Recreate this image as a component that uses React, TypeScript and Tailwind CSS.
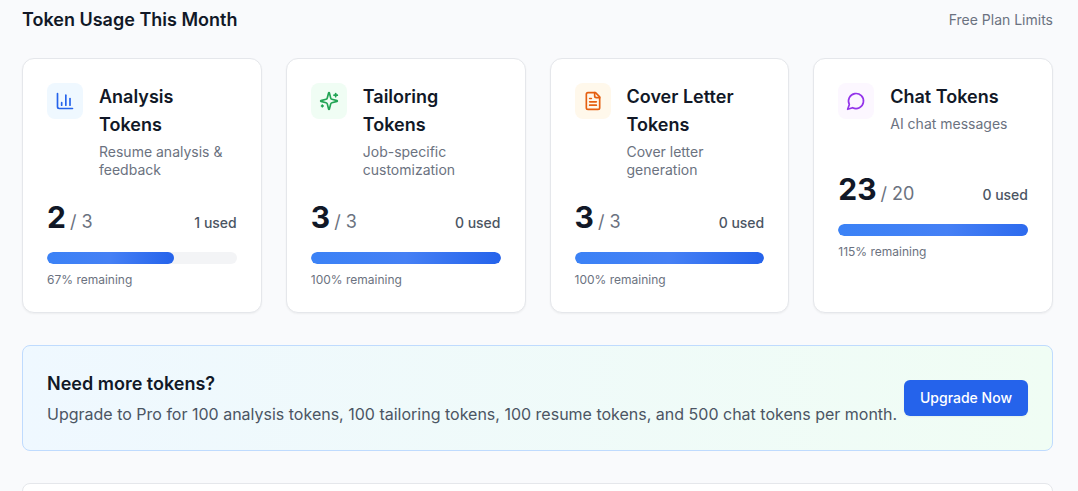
import React from 'react';
import { ChartColumn } from 'lucide-react';

interface TokenCard {
  title: string;
  description: string;
  remaining: number;
  limit: number;
  used: number;
  iconClass: string;
  icon: React.ReactNode;
}

const svgProps = {
  viewBox: '0 0 24 24',
  fill: 'none',
  stroke: 'currentColor',
  strokeWidth: 2,
  strokeLinecap: 'round' as const,
  strokeLinejoin: 'round' as const,
  className: 'w-5 h-5',
};

const SparklesIcon = () => (
  <svg {...svgProps}>
    <path d="M9.937 15.5A2 2 0 0 0 8.5 14.063l-6.135-1.582a.5.5 0 0 1 0-.962L8.5 9.936A2 2 0 0 0 9.937 8.5l1.582-6.135a.5.5 0 0 1 .963 0L14.063 8.5A2 2 0 0 0 15.5 9.937l6.135 1.581a.5.5 0 0 1 0 .964L15.5 14.063a2 2 0 0 0-1.437 1.437l-1.582 6.135a.5.5 0 0 1-.963 0z" />
    <path d="M20 3v4" />
    <path d="M22 5h-4" />
    <path d="M4 17v2" />
    <path d="M5 18H3" />
  </svg>
);

const FileIcon = () => (
  <svg {...svgProps}>
    <path d="M15 2H6a2 2 0 0 0-2 2v16a2 2 0 0 0 2 2h12a2 2 0 0 0 2-2V7Z" />
    <path d="M14 2v4a2 2 0 0 0 2 2h4" />
    <path d="M10 9H8" />
    <path d="M16 13H8" />
    <path d="M16 17H8" />
  </svg>
);

const ChatIcon = () => (
  <svg {...svgProps}>
    <path d="M7.9 20A9 9 0 1 0 4 16.1L2 22Z" />
  </svg>
);

const cards: TokenCard[] = [
  {
    title: 'Analysis Tokens',
    description: 'Resume analysis & feedback',
    remaining: 2,
    limit: 3,
    used: 1,
    iconClass: 'bg-[#eff8ff] text-[#2563eb]',
    icon: <ChartColumn className="w-5 h-5" />,
  },
  {
    title: 'Tailoring Tokens',
    description: 'Job-specific customization',
    remaining: 3,
    limit: 3,
    used: 0,
    iconClass: 'bg-[#f0fdf4] text-[#22a454]',
    icon: <SparklesIcon />,
  },
  {
    title: 'Cover Letter Tokens',
    description: 'Cover letter generation',
    remaining: 3,
    limit: 3,
    used: 0,
    iconClass: 'bg-[#fff8eb] text-[#e55f10]',
    icon: <FileIcon />,
  },
  {
    title: 'Chat Tokens',
    description: 'AI chat messages',
    remaining: 23,
    limit: 20,
    used: 0,
    iconClass: 'bg-[#fcf7ff] text-[#9333ea]',
    icon: <ChatIcon />,
  },
];

function UsageCard({ card }: { card: TokenCard }) {
  const percent = Math.round((card.remaining / card.limit) * 100);

  return (
    <div className="bg-white border border-[#e5e7eb] rounded-xl shadow-[0_1px_2px_0_rgba(0,0,0,0.05)] p-6">
      <div className="flex items-start gap-4 mb-4">
        <div className={`p-2 rounded-lg flex-shrink-0 ${card.iconClass}`}>{card.icon}</div>
        <div className="flex-1 min-w-0">
          <h3 className="text-lg font-semibold text-[#111827]">{card.title}</h3>
          <p className="mt-1 min-h-10 text-sm leading-tight text-[#6b7280]">{card.description}</p>
        </div>
      </div>

      <div className="flex items-baseline justify-between mb-4">
        <div>
          <span className="text-3xl font-bold text-[#111827]">{card.remaining}</span>
          <span className="text-lg text-[#6b7280] ml-1">/ {card.limit}</span>
        </div>
        <span className="text-sm font-medium text-[#4b5563]">{card.used} used</span>
      </div>

      <div className="h-3 bg-[#f3f4f6] rounded-full overflow-hidden">
        <div
          className="h-3 rounded-full bg-linear-to-r/srgb from-[#3b82f6] via-[#4580f5] to-[#2563eb]"
          style={{ width: `${percent}%` }}
        />
      </div>
      <p className="mt-2 text-xs text-[#6b7280]">{percent}% remaining</p>
    </div>
  );
}

export default function App() {
  return (
    <div className="h-screen overflow-hidden bg-[#f9fafc] font-['Inter',sans-serif] pl-[22px] pr-[25px] pt-1.5">
      {/* Header */}
      <div className="flex items-center justify-between mb-6">
        <h2 className="text-lg font-semibold text-[#111827]">Token Usage This Month</h2>
        <span className="text-sm text-[#6b7280]">Free Plan Limits</span>
      </div>

      {/* Token cards */}
      <div className="grid grid-cols-4 gap-6 mb-8">
        {cards.map((card) => (
          <UsageCard key={card.title} card={card} />
        ))}
      </div>

      {/* Upgrade banner */}
      <div className="flex items-center justify-between bg-linear-to-r/srgb from-[#eff8ff] to-[#f0fdf4] border border-[#bfdbfe] rounded-lg p-6 mb-8">
        <div>
          <h3 className="text-lg font-semibold text-[#111827]">Need more tokens?</h3>
          <p className="mt-1 text-[#4b5563] whitespace-nowrap">
            Upgrade to Pro for 100 analysis tokens, 100 tailoring tokens, 100 resume tokens, and 500 chat tokens per month.
          </p>
        </div>
        <button className="h-9 px-4 flex-shrink-0 rounded-md bg-[#2563eb] text-white text-sm font-medium shadow-[0_1px_2px_0_rgba(0,0,0,0.05)]">
          Upgrade Now
        </button>
      </div>

      {/* Next section */}
      <div className="h-40 bg-white border border-[#e5e7eb] rounded-lg" />
    </div>
  );
}
